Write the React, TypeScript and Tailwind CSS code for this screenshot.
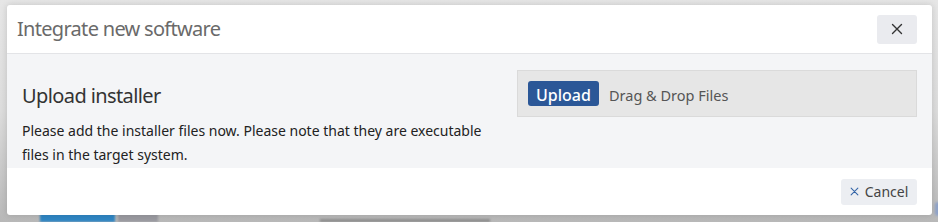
import React from 'react';

function XIcon({ className }: { className?: string }) {
  return (
    <svg viewBox="0 0 12 12" className={className} fill="none" stroke="currentColor" strokeWidth="1.4" strokeLinecap="round">
      <path d="M1.5 1.5l9 9M10.5 1.5l-9 9" />
    </svg>
  );
}

export default function App() {
  return (
    <div
      className="relative h-[222px] w-full overflow-hidden bg-gradient-to-b from-[#e6e6e6] via-[#dcdcdc] to-[#b8b8b8] pt-[5px] pl-[7px]"
      style={{ fontFamily: '"Noto Sans", "Open Sans", sans-serif' }}
    >
      {/* blurred app behind the dialog */}
      <div className="absolute bottom-0 left-[40px] h-[10px] w-[75px] bg-[#2f86c4] blur-[1px]" />
      <div className="absolute bottom-0 left-[118px] h-[10px] w-[40px] bg-[#9a9aa0] blur-[1px]" />
      <div className="absolute bottom-0 left-[320px] h-[3px] w-[170px] bg-[#8d8d8d] blur-[1px]" />
      <div className="absolute bottom-[6px] left-[935px] h-[14px] w-[6px] rounded-full bg-[#8fa3c9] blur-[1px]" />

      <div className="relative flex w-[925px] flex-col overflow-hidden rounded-[3px] bg-white shadow-[0_0_6px_rgba(0,0,0,0.15)]">
        {/* Header */}
        <div className="flex h-[49px] items-center justify-between border-b border-[#e3e4e7] pl-[10px] pr-[15px]">
          <h2 className="text-[20px] tracking-[-0.7px] text-[#6a6a6a]">Integrate new software</h2>
          <button className="flex h-[29px] w-[40px] items-center justify-center rounded-[3px] bg-[#eaebef] text-[#333]">
            <XIcon className="h-[12px] w-[12px]" />
          </button>
        </div>

        {/* Body */}
        <div className="flex h-[114px] justify-between bg-[#f4f5f7] px-[15px] pt-[16px]">
          <div className="w-[480px] pt-[12px]">
            <h3 className="text-[20px] leading-[28px] tracking-[-0.6px] text-[#333]">Upload installer</h3>
            <p className="mt-[9px] text-[14px] leading-[24px] text-[#222]">
              Please add the installer files now. Please note that they are executable files in the target system.
            </p>
          </div>
          <div className="w-[400px]">
            <div className="flex h-[47px] items-center gap-[10px] border border-[#dadada] bg-[#e6e6e6] px-[10px]">
              <button className="h-[25px] w-[71px] overflow-hidden rounded-[3px] bg-[#2b5797] text-[16px] font-medium leading-[28px] text-white">
                Upload
              </button>
              <span className="mt-[4px] text-[14.5px] text-[#555]">Drag &amp; Drop Files</span>
            </div>
          </div>
        </div>

        {/* Footer */}
        <div className="flex h-[47px] items-center justify-end px-[15px]">
          <button className="flex h-[26px] w-[76px] items-center justify-center gap-[6px] rounded-[3px] bg-[#eceef2] text-[14px] text-[#444]">
            <XIcon className="h-[9px] w-[9px] text-[#3465a8]" />
            Cancel
          </button>
        </div>
      </div>
    </div>
  );
}
